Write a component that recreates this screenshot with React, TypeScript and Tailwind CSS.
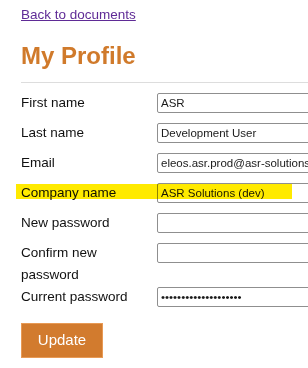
import React from "react";

const font = { fontFamily: '"Liberation Sans", Arial, sans-serif' };

function Row({
  label,
  value,
  type = "text",
  highlight = false,
}: {
  label: string;
  value: string;
  type?: string;
  highlight?: boolean;
}) {
  return (
    <div className="relative flex items-start">
      <div className="w-[136px] shrink-0 pr-[8px] text-[13.5px] leading-[22px] text-[#111]">
        {label}
      </div>
      <div className="h-[30px] shrink-0 pt-[1px]">
        <input
          type={type}
          readOnly
          defaultValue={value}
          className="block h-[20px] w-[220px] rounded-[2px] border border-[#8f8f8f] bg-white px-[3px] text-[11.5px] text-[#1a1a1a] outline-none"
          style={font}
        />
      </div>
      {highlight && (
        <span className="pointer-events-none absolute left-[-5px] top-[2px] h-[15px] w-[276px] bg-[#ffea00] mix-blend-multiply" />
      )}
    </div>
  );
}

export default function App() {
  return (
    <div
      className="h-[368px] w-[308px] overflow-hidden bg-white pl-[21px]"
      style={font}
    >
      <div className="pt-[5px] text-[13.5px] leading-[20px]">
        <a href="#" className="text-[#5f2b96] underline">
          Back to documents
        </a>
      </div>
      <h1 className="mt-[17px] text-[24px] font-bold leading-[28px] text-[#d07a2b]">
        My Profile
      </h1>
      <div className="mt-[12px] h-px w-[400px] bg-[#dddddd]" />
      <div className="mt-[9px] flex flex-col">
        <Row label="First name" value="ASR" />
        <Row label="Last name" value="Development User" />
        <Row label="Email" value="eleos.asr.prod@asr-solutions.com" />
        <Row label="Company name" value="ASR Solutions (dev)" highlight />
        <Row label="New password" value="" type="password" />
        <Row label="Confirm new password" value="" type="password" />
        <Row label="Current password" value="12345678901234567890" type="password" />
      </div>
      <button
        type="button"
        className="mt-[7px] flex h-[35px] w-[82px] items-center justify-center border border-[#e89a55] bg-[#d27b2e] text-[15px] text-white"
      >
        Update
      </button>
    </div>
  );
}
